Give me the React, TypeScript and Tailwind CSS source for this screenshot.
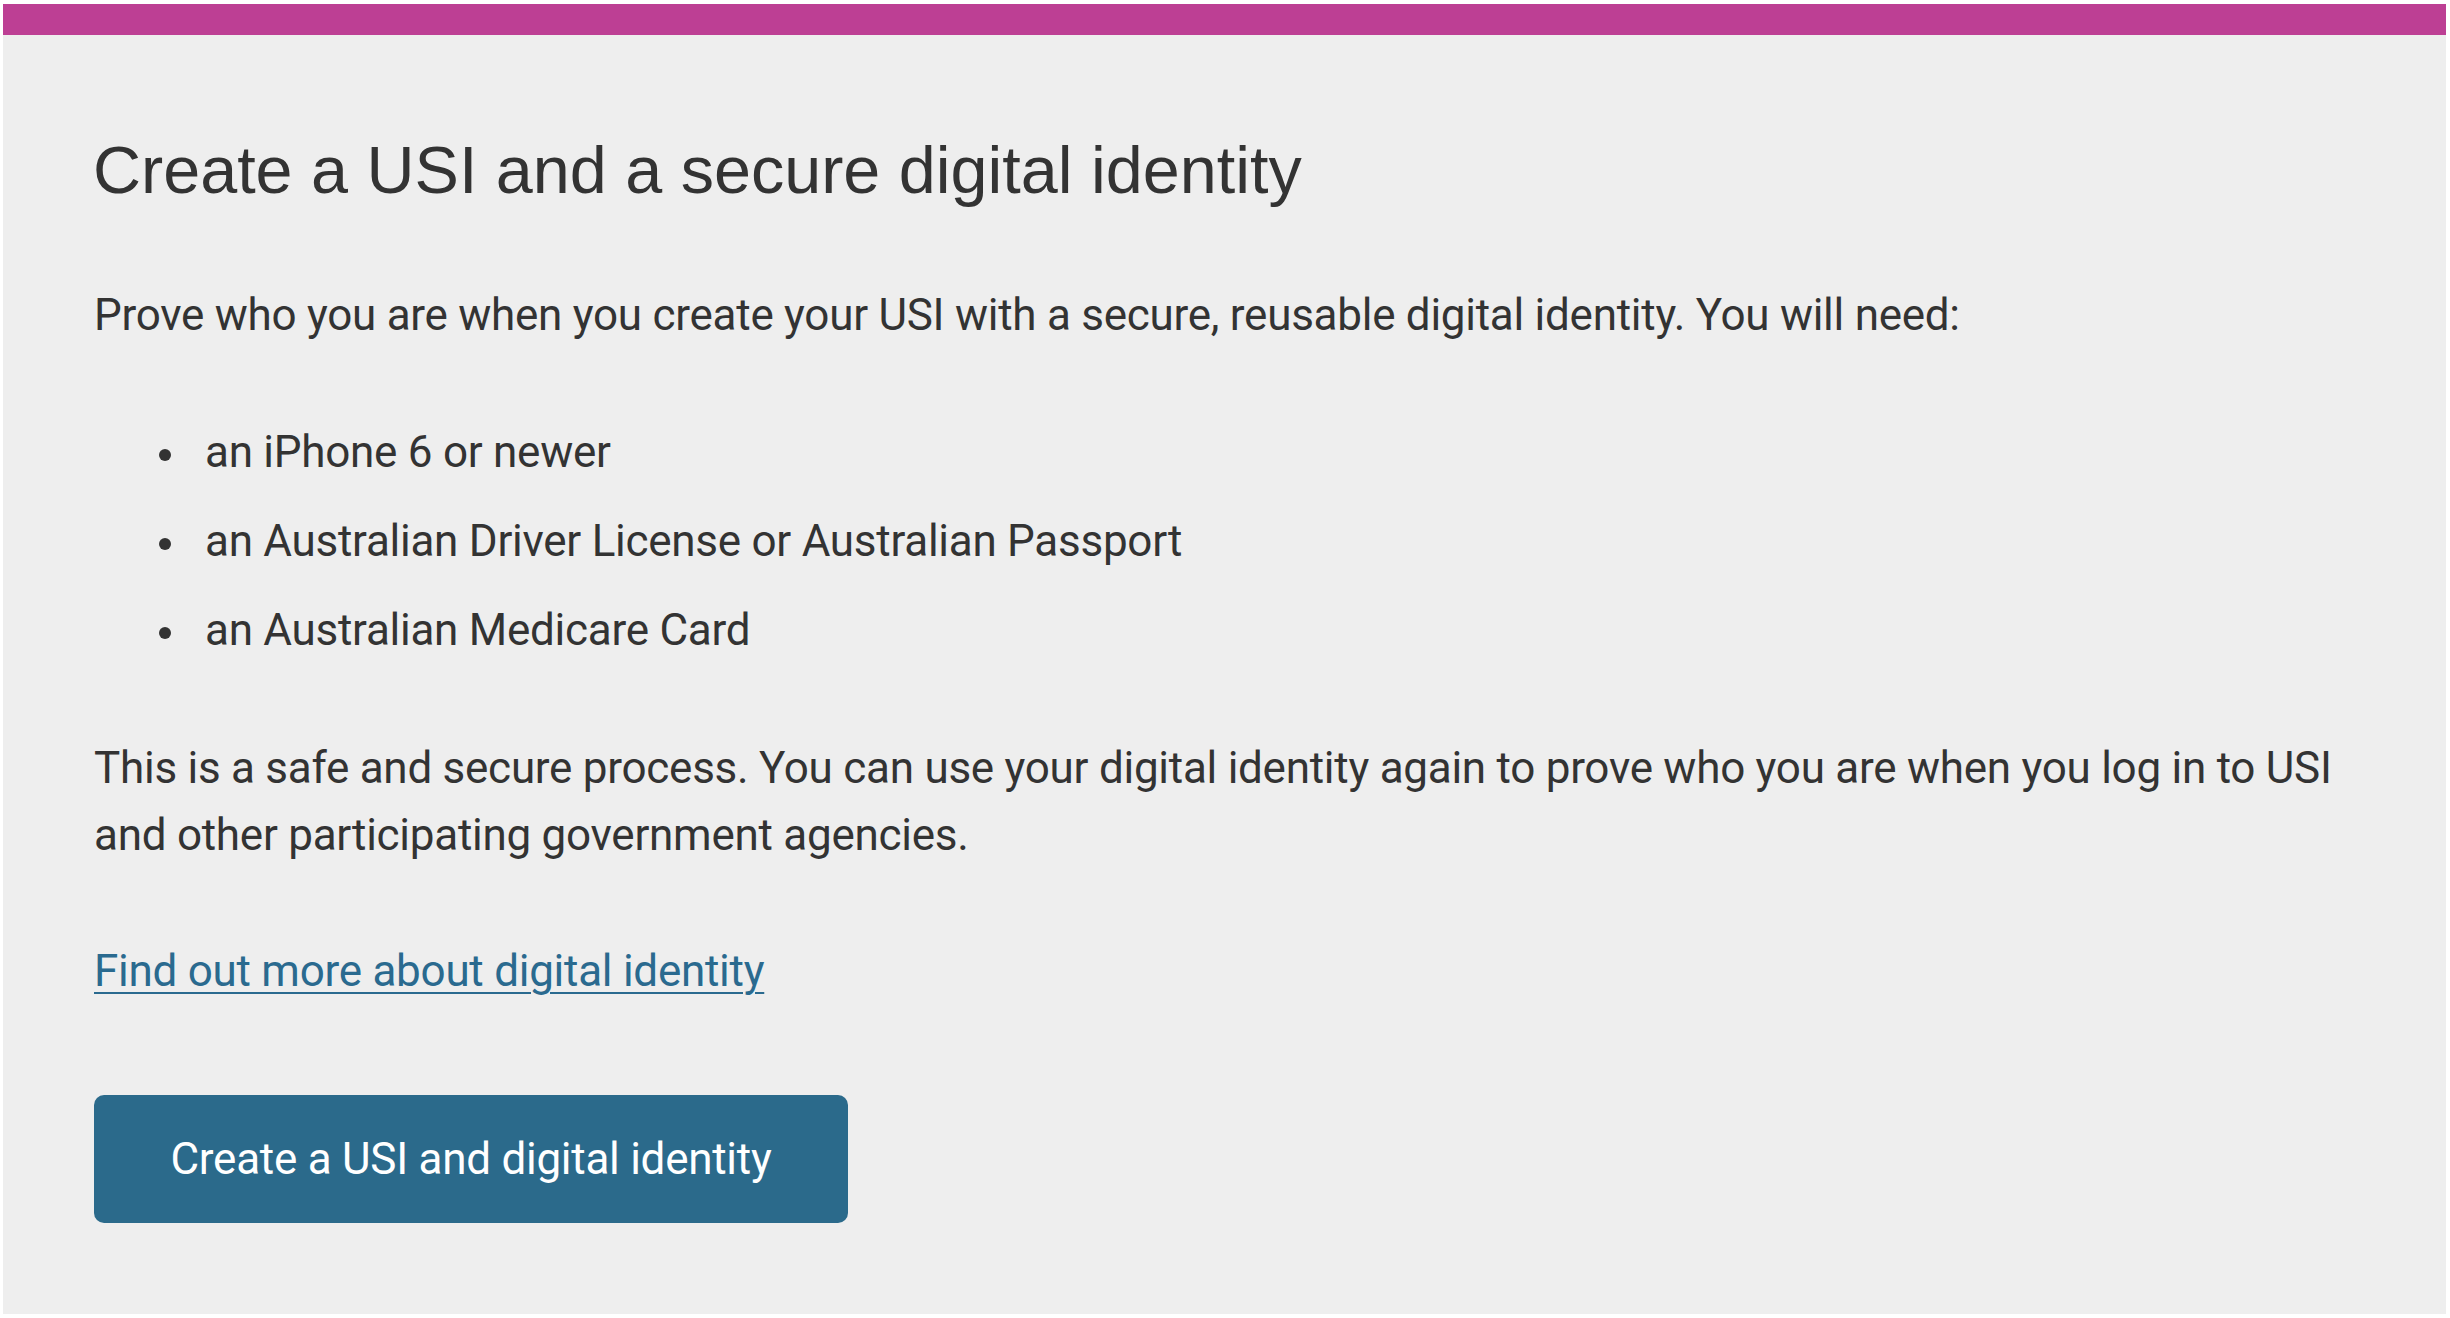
export default function App() {
  const items = [
    "an iPhone 6 or newer",
    "an Australian Driver License or Australian Passport",
    "an Australian Medicare Card",
  ];

  return (
    <div className="min-h-screen bg-white pt-[4px] pl-[3px] pr-[4px] pb-[5px]">
      <div className="bg-[#eeeeee] text-[#333333]">
        <div className="h-[31px] bg-[#bd3f94]" />

        <div className="px-[91px] pt-[96px] pb-[91px] font-['Roboto','Inter',sans-serif] text-[44px] leading-[67px] tracking-[-0.006em]">
          <h1 className="font-['Liberation_Sans','Arial',sans-serif] text-[66.5px] leading-[79px] font-normal tracking-normal -ml-[1px]">
            Create a USI and a secure digital identity
          </h1>

          <p className="mt-[72px]">
            Prove who you are when you create your USI with a secure, reusable digital identity. You will need:
          </p>

          <ul className="mt-[70px] flex flex-col gap-[22px]">
            {items.map((item) => (
              <li key={item} className="flex items-center">
                <span className="ml-[65px] mr-[34px] mt-[4px] h-[12px] w-[12px] shrink-0 rounded-full bg-[#333333]" />
                <span>{item}</span>
              </li>
            ))}
          </ul>

          <p className="mt-[71px]">
            This is a safe and secure process. You can use your digital identity again to prove who you are when you log in to USI
            and other participating government agencies.
          </p>

          <div className="mt-[69px]">
            <a
              href="#"
              className="text-[#2a6a8f] underline decoration-[2px] underline-offset-[6px]"
            >
              Find out more about digital identity
            </a>
          </div>

          <button className="mt-[90px] flex h-[128px] w-[754px] items-center justify-center rounded-[10px] bg-[#2b6a8b] text-white">
            Create a USI and digital identity
          </button>
        </div>
      </div>
    </div>
  );
}
